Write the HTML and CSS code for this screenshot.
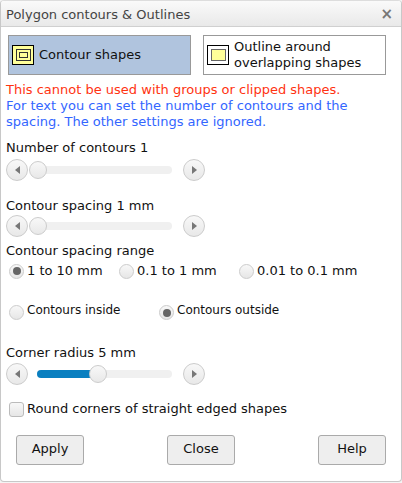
FILE: index.html
```html
<!DOCTYPE html>
<html>
  <head>
    <link rel="stylesheet" href="styles.css">
  </head>
  <body>
    <div class="dialog">
      <div class="titlebar">
        <span>Polygon contours &amp; Outlines</span>
        <span class="close">&times;</span>
      </div>

      <div class="content">
        <div class="mode-row">
          <div class="mode active">
            <svg class="mode-icon" width="22" height="20" viewBox="0 0 22 20">
              <rect x="0.5" y="0.5" width="21" height="19" fill="#ffff99" stroke="#000"/>
              <rect x="4.5" y="4.5" width="14" height="11" fill="none" stroke="#333"/>
              <rect x="7.5" y="7.5" width="8" height="5" fill="none" stroke="#333"/>
            </svg>
            <span>Contour shapes</span>
          </div>
          <div class="mode">
            <svg class="mode-icon" width="22" height="20" viewBox="0 0 22 20">
              <rect x="0.5" y="0.5" width="21" height="19" fill="#fff" stroke="#000"/>
              <rect x="4.5" y="4.5" width="14" height="11" fill="#ffff99" stroke="#666"/>
            </svg>
            <span>Outline around<br>overlapping shapes</span>
          </div>
        </div>

        <p class="warning">This cannot be used with groups or clipped shapes.</p>
        <p class="note">For text you can set the number of contours and the spacing. The other settings are ignored.</p>

        <div class="label label-first">Number of contours 1</div>
        <div class="slider">
          <div class="step"><span class="arrow-left"></span></div>
          <div class="track"><div class="thumb"></div></div>
          <div class="step"><span class="arrow-right"></span></div>
        </div>

        <div class="label label-second">Contour spacing 1 mm</div>
        <div class="slider slider-tight">
          <div class="step"><span class="arrow-left"></span></div>
          <div class="track"><div class="thumb"></div></div>
          <div class="step"><span class="arrow-right"></span></div>
        </div>

        <div class="label label-range">Contour spacing range</div>
        <div class="radio-row range-row">
          <div class="option range-a"><span class="radio checked"></span>1 to 10 mm</div>
          <div class="option range-b"><span class="radio"></span>0.1 to 1 mm</div>
          <div class="option"><span class="radio"></span>0.01 to 0.1 mm</div>
        </div>

        <div class="radio-row side-row">
          <div class="option side-a"><span class="radio"></span>Contours inside</div>
          <div class="option"><span class="radio checked"></span>Contours outside</div>
        </div>

        <div class="label label-radius">Corner radius 5 mm</div>
        <div class="slider slider-close">
          <div class="step"><span class="arrow-left"></span></div>
          <div class="track">
            <div class="fill" style="width: 55px"></div>
            <div class="thumb"></div>
          </div>
          <div class="step"><span class="arrow-right"></span></div>
        </div>

        <div class="option check-row"><span class="checkbox"></span>Round corners of straight edged shapes</div>

        <div class="buttons">
          <button class="button">Apply</button>
          <button class="button">Close</button>
          <button class="button">Help</button>
        </div>
      </div>
    </div>
  </body>
</html>
```

FILE: styles.css
```css
html,
body {
  margin: 0;
  padding: 0;
  background-color: #f4f4f4;
}

body {
  font-family: "DejaVu Sans", Verdana, sans-serif;
  font-size: 13px;
  color: #111;
}

.dialog {
  width: 402px;
  height: 482px;
  box-sizing: border-box;
  background-color: white;
  border: 1px solid #c8c8c8;
  border-top-color: #ddd;
  border-radius: 4px;
}

.titlebar {
  height: 26px;
  box-sizing: border-box;
  display: flex;
  justify-content: space-between;
  align-items: center;
  padding: 1px 8px 0 5px;
  background: linear-gradient(#fafafa, #e9e9e9);
  border-bottom: 1px solid #d0d0d0;
  border-radius: 3px 3px 0 0;
  color: #444;
  font-size: 13px;
}

.close {
  color: #777;
  font-size: 15px;
  font-weight: bold;
  line-height: 1;
}

.content {
  padding: 8px 15px 0 5px;
}

.mode-row {
  display: flex;
  gap: 12px;
  padding-left: 2px;
}

.mode {
  width: 183px;
  height: 40px;
  box-sizing: border-box;
  display: flex;
  align-items: center;
  gap: 5px;
  padding-left: 3px;
  line-height: 16px;
  background-color: white;
  border: 1px solid #999;
}

.mode.active {
  background-color: #b0c4de;
}

.mode-icon {
  flex: none;
}

p {
  margin: 0;
  line-height: 16px;
}

.warning {
  margin-top: 7px;
  color: #ff3311;
}

.note {
  color: #3366ff;
}

.label {
  line-height: 16px;
}

.label-first {
  margin-top: 10px;
}

.label-second {
  margin-top: 17px;
}

.label-range {
  margin-top: 6px;
}

.label-radius {
  margin-top: 25px;
}

.slider {
  display: flex;
  align-items: center;
  margin-top: 3px;
}

.slider-tight {
  margin-top: 1px;
}

.slider-close {
  margin-top: 2px;
}

.step {
  width: 22px;
  height: 22px;
  box-sizing: border-box;
  display: flex;
  align-items: center;
  justify-content: center;
  background: linear-gradient(#f8f8f8, #e8e8e8);
  border: 1px solid #ccc;
  border-radius: 50%;
}

.arrow-left {
  border: 4px solid transparent;
  border-left: 0;
  border-right: 5px solid #777;
}

.arrow-right {
  border: 4px solid transparent;
  border-right: 0;
  border-left: 5px solid #777;
}

.track {
  position: relative;
  width: 135px;
  height: 8px;
  margin: 0 11px 0 9px;
  background-color: #f0f0f0;
  border-radius: 4px;
}

.fill {
  height: 8px;
  background-color: #0a7fc0;
  border-radius: 4px 0 0 4px;
}

.thumb {
  position: absolute;
  top: -5px;
  left: -8px;
  width: 18px;
  height: 18px;
  box-sizing: border-box;
  background: linear-gradient(#f8f8f8, #e8e8e8);
  border: 1px solid #ccc;
  border-radius: 50%;
}

.fill + .thumb {
  left: 52px;
}

.radio-row {
  display: flex;
  line-height: 16px;
}

.range-row {
  margin-top: 4px;
  padding-left: 3px;
}

.side-row {
  margin-top: 23px;
  padding-left: 3px;
  font-size: 12px;
}

.side-row .option {
  align-items: flex-start;
}

.side-row .radio {
  margin-top: 3px;
}

.option {
  display: flex;
  align-items: center;
}

.range-a {
  width: 110px;
}

.range-b {
  width: 120px;
}

.side-a {
  width: 150px;
}

.radio {
  width: 15px;
  height: 15px;
  box-sizing: border-box;
  display: flex;
  align-items: center;
  justify-content: center;
  margin-right: 3px;
  background: linear-gradient(#f8f8f8, #e6e6e6);
  border: 1px solid #ccc;
  border-radius: 50%;
}

.radio.checked::after {
  content: "";
  width: 8px;
  height: 8px;
  background-color: #666;
  border-radius: 50%;
}

.check-row {
  margin-top: 16px;
  padding-left: 3px;
  line-height: 16px;
}

.checkbox {
  width: 15px;
  height: 15px;
  box-sizing: border-box;
  margin-right: 3px;
  background: linear-gradient(#f8f8f8, #e6e6e6);
  border: 1px solid #bbb;
  border-radius: 3px;
}

.buttons {
  display: flex;
  justify-content: space-between;
  margin: 18px 0 0 10px;
}

.button {
  width: 68px;
  height: 30px;
  padding: 0 0 3px;
  font-family: inherit;
  font-size: 13px;
  color: #111;
  background-color: #eee;
  border: 1px solid #aaa;
  border-radius: 3px;
}
```
